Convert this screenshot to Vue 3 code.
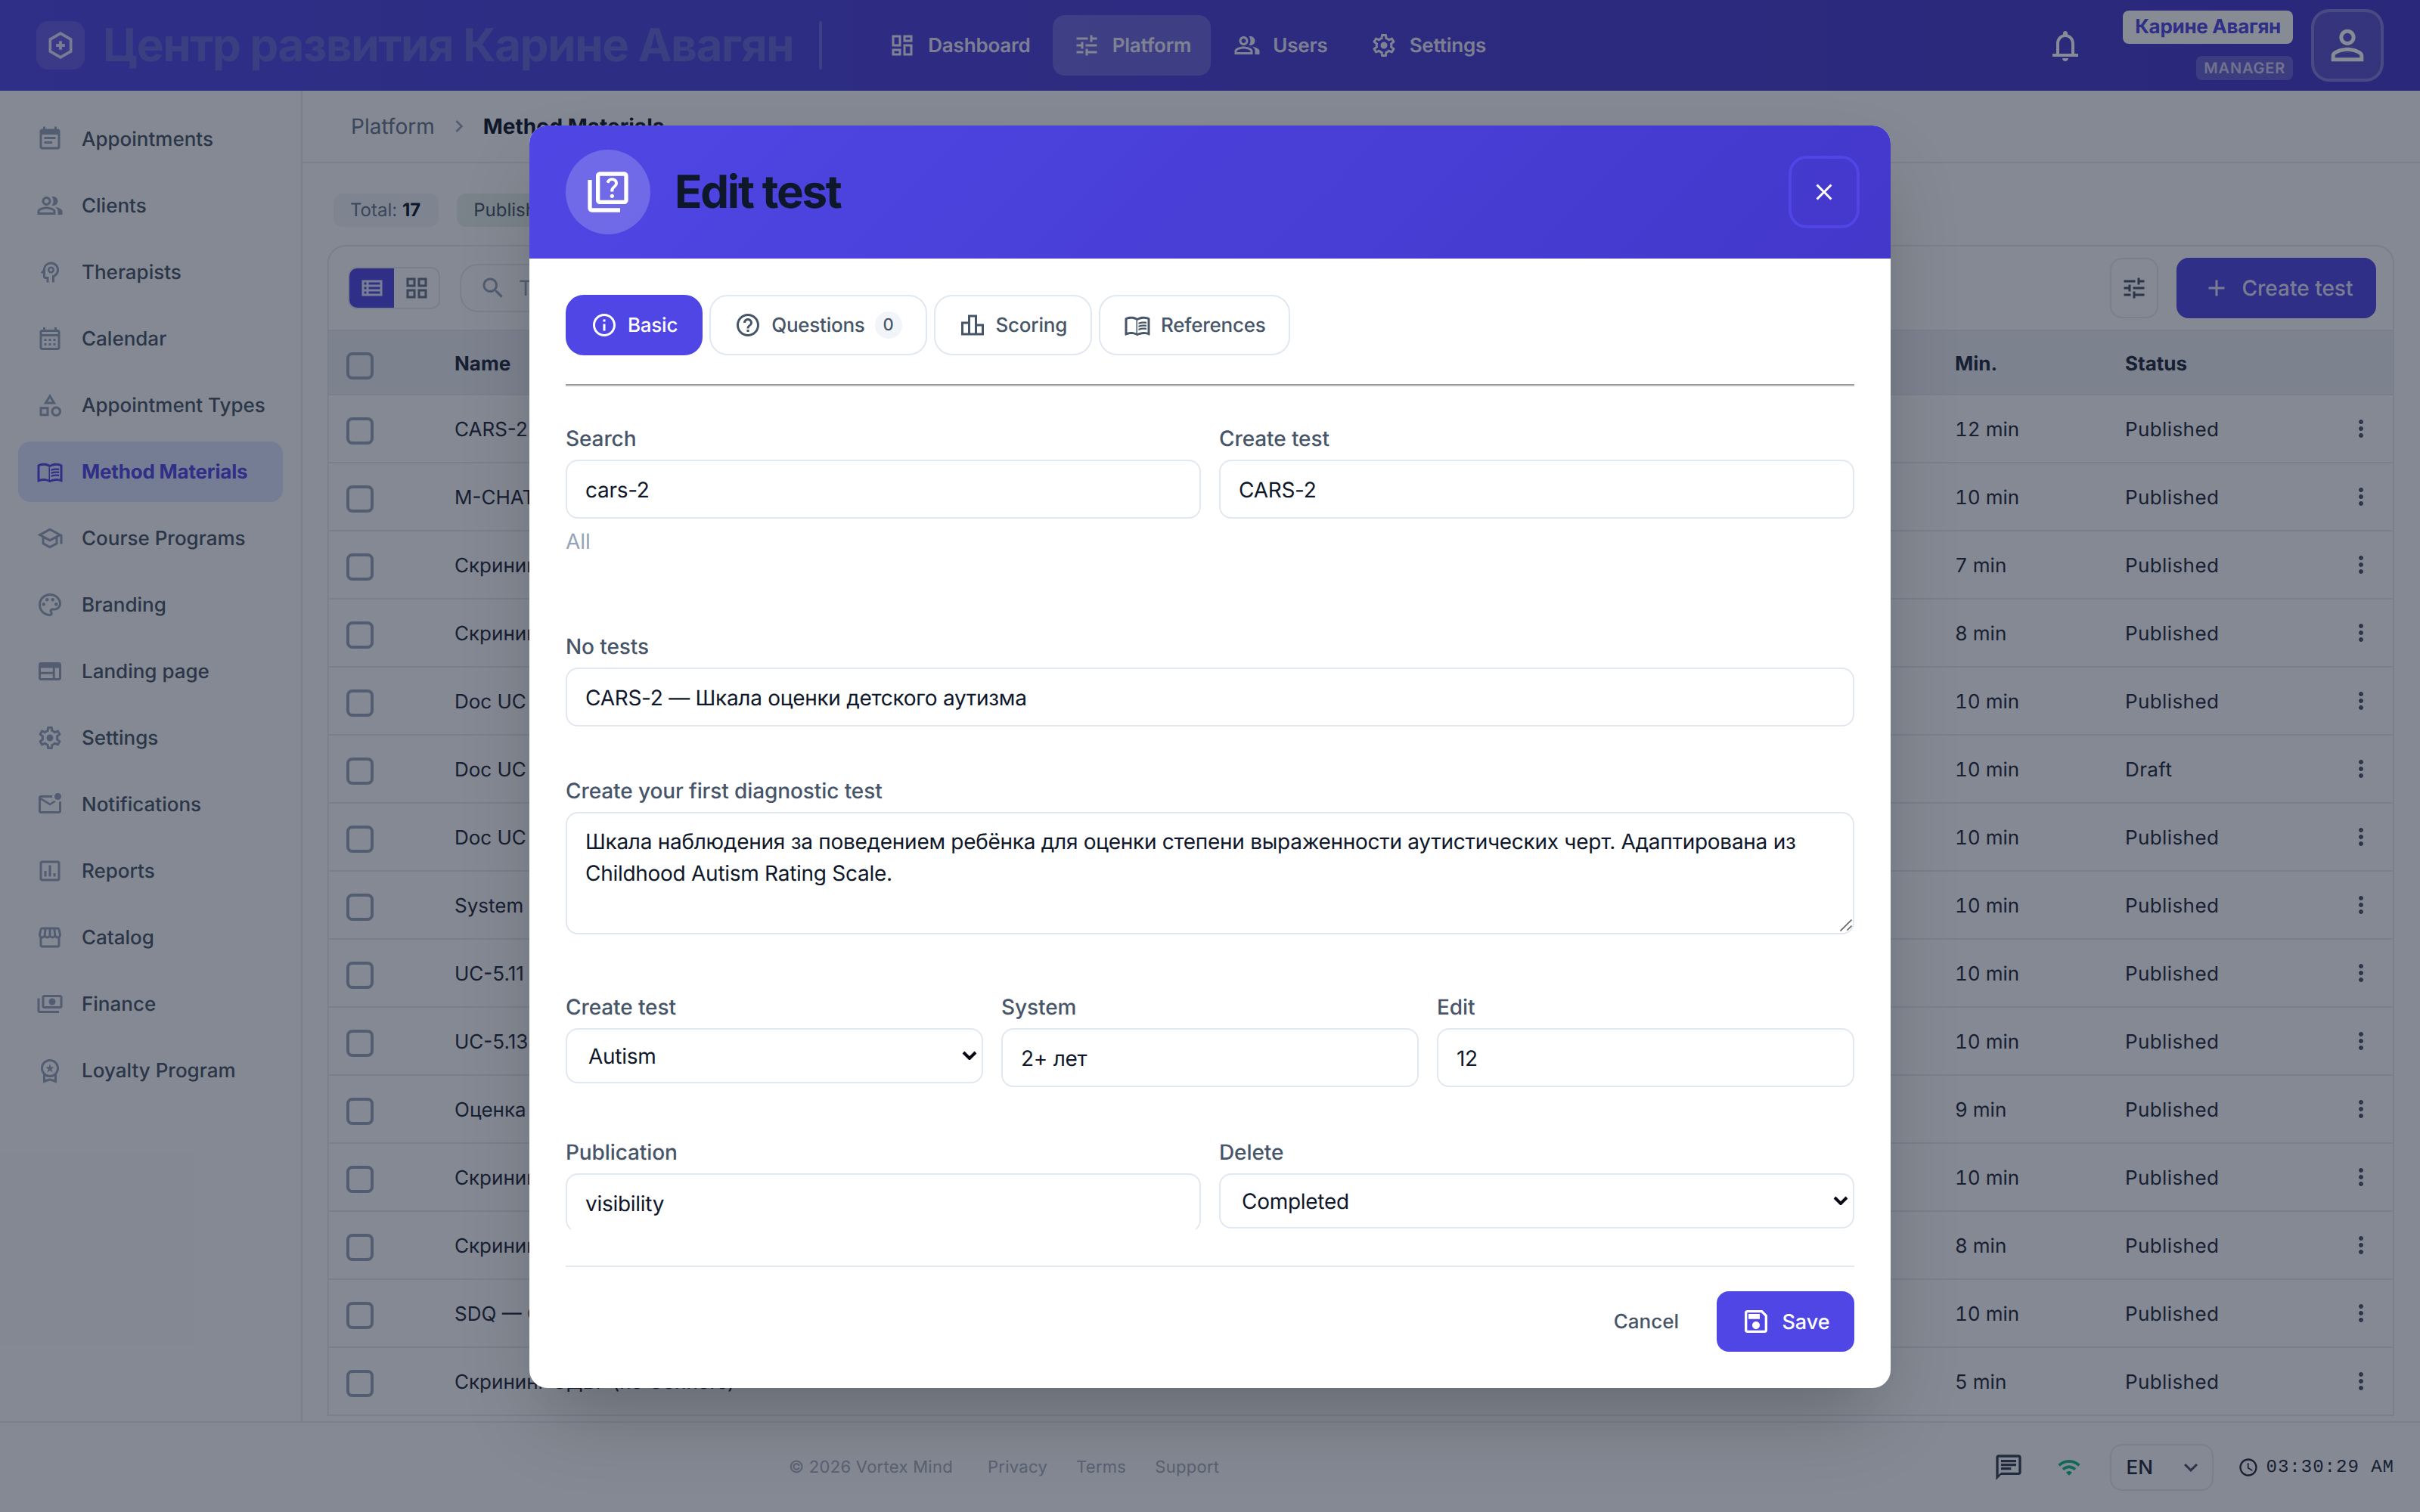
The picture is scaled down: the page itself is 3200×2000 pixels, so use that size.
<script setup>
const I = {
  event: 'M17 10H7v2h10v-2zm2-7h-1V1h-2v2H8V1H6v2H5c-1.11 0-1.99.9-1.99 2L3 19c0 1.1.89 2 2 2h14c1.1 0 2-.9 2-2V5c0-1.1-.9-2-2-2zm0 16H5V8h14v11zm-5-5H7v2h7v-2z',
  group: 'M16.67 13.13C18.04 14.06 19 15.32 19 17v3h4v-3c0-2.18-3.57-3.47-6.33-3.87zM15 12c2.21 0 4-1.79 4-4s-1.79-4-4-4c-.47 0-.91.1-1.33.24C14.5 5.27 15 6.58 15 8s-.5 2.73-1.33 3.76c.42.14.86.24 1.33.24zM9 12c2.21 0 4-1.79 4-4s-1.79-4-4-4-4 1.79-4 4 1.79 4 4 4zm0-6c1.1 0 2 .9 2 2s-.9 2-2 2-2-.9-2-2 .9-2 2-2zM9 13c-2.67 0-8 1.34-8 4v3h16v-3c0-2.66-5.33-4-8-4zm6 5H3v-.99C3.2 16.29 6.3 15 9 15s5.8 1.29 6 2v1z',
  psych: 'M13 3C9.25 3 6.2 5.94 6.02 9.64L4.1 12.2c-.25.33-.01.8.4.8H6v3c0 1.1.9 2 2 2h1v3h2v-5H8v-5.5l.02-1.2C8.1 6.9 10.3 5 13 5c2.76 0 5 2.24 5 5 0 2.09-1.29 3.94-3.21 4.67L14 15v6h2v-4.68c2.36-1.12 4-3.53 4-6.32 0-3.87-3.13-7-7-7zM13 7a3 3 0 100 6 3 3 0 000-6zm0 1.7a1.3 1.3 0 110 2.6 1.3 1.3 0 010-2.6z',
  cal: 'M19 4h-1V2h-2v2H8V2H6v2H5c-1.1 0-2 .9-2 2v14c0 1.1.9 2 2 2h14c1.1 0 2-.9 2-2V6c0-1.1-.9-2-2-2zm0 16H5V10h14v10zm0-12H5V6h14v2zM9 14H7v-2h2v2zm4 0h-2v-2h2v2zm4 0h-2v-2h2v2zm-8 4H7v-2h2v2zm4 0h-2v-2h2v2zm4 0h-2v-2h2v2z',
  category: 'M12 2l-5.5 9h11L12 2zm0 3.84L13.93 9h-3.87L12 5.84zM17.5 13c-2.49 0-4.5 2.01-4.5 4.5s2.01 4.5 4.5 4.5 4.5-2.01 4.5-4.5-2.01-4.5-4.5-4.5zm0 7c-1.38 0-2.5-1.12-2.5-2.5s1.12-2.5 2.5-2.5 2.5 1.12 2.5 2.5-1.12 2.5-2.5 2.5zM3 21.5h8v-8H3v8zm2-6h4v4H5v-4z',
  book: 'M21 5c-1.11-.35-2.33-.5-3.5-.5-1.95 0-4.05.4-5.5 1.5-1.45-1.1-3.55-1.5-5.5-1.5S2.45 4.9 1 6v14.65c0 .25.25.5.5.5.1 0 .15-.05.25-.05C3.1 20.45 5.05 20 6.5 20c1.95 0 4.05.4 5.5 1.5 1.35-.85 3.8-1.5 5.5-1.5 1.65 0 3.35.3 4.75 1.05.1.05.15.05.25.05.25 0 .5-.25.5-.5V6c-.6-.45-1.25-.75-2-1zM3 18.5V7c1.1-.35 2.3-.5 3.5-.5 1.34 0 3.13.41 4.5.99v11.5C9.63 18.41 7.84 18 6.5 18c-1.2 0-2.4.15-3.5.5zm18 0c-1.1-.35-2.3-.5-3.5-.5-1.7 0-4.15.65-5.5 1.5V8c1.35-.85 3.8-1.5 5.5-1.5 1.2 0 2.4.15 3.5.5v11.5zM17.5 10.5c.88 0 1.73.09 2.5.26V9.24c-.79-.15-1.64-.24-2.5-.24-1.7 0-3.24.29-4.5.83v1.66c1.13-.64 2.7-.99 4.5-.99zM13 12.49v1.66c1.13-.64 2.7-.99 4.5-.99.88 0 1.73.09 2.5.26V11.9c-.79-.15-1.64-.24-2.5-.24-1.7 0-3.24.3-4.5.83zM17.5 14.33c-1.7 0-3.24.29-4.5.83v1.66c1.13-.64 2.7-.99 4.5-.99.88 0 1.73.09 2.5.26v-1.52c-.79-.16-1.64-.24-2.5-.24z',
  school: 'M12 3L1 9l4 2.18v6L12 21l7-3.82v-6l2-1.09V17h2V9L12 3zm6.82 6L12 12.72 5.18 9 12 5.28 18.82 9zM17 15.99l-5 2.73-5-2.73v-3.72L12 15l5-2.73v3.72z',
  palette: 'M12 22C6.49 22 2 17.51 2 12S6.49 2 12 2s10 4.04 10 9c0 3.31-2.69 6-6 6h-1.77c-.28 0-.5.22-.5.5 0 .12.05.23.13.33.41.47.64 1.06.64 1.67 0 1.38-1.12 2.5-2.5 2.5zm0-18c-4.41 0-8 3.59-8 8s3.59 8 8 8c.28 0 .5-.22.5-.5 0-.16-.08-.28-.14-.35-.41-.46-.63-1.05-.63-1.65 0-1.38 1.12-2.5 2.5-2.5H16c2.21 0 4-1.79 4-4 0-3.86-3.59-7-8-7zM6.5 10a1.5 1.5 0 110 3 1.5 1.5 0 010-3zM9.5 6a1.5 1.5 0 110 3 1.5 1.5 0 010-3zM14.5 6a1.5 1.5 0 110 3 1.5 1.5 0 010-3zM17.5 10a1.5 1.5 0 110 3 1.5 1.5 0 010-3z',
  web: 'M20 4H4c-1.1 0-1.99.9-1.99 2L2 18c0 1.1.9 2 2 2h16c1.1 0 2-.9 2-2V6c0-1.1-.9-2-2-2zM4 9h10.5v3.5H4V9zm0 5.5h10.5V18H4v-3.5zM20 18h-3.5V9H20v9z',
  settings: 'M19.43 12.98c.04-.32.07-.64.07-.98 0-.34-.03-.66-.07-.98l2.11-1.65c.19-.15.24-.42.12-.64l-2-3.46c-.09-.16-.26-.25-.44-.25-.06 0-.12.01-.17.03l-2.49 1c-.52-.4-1.08-.73-1.69-.98l-.38-2.65C14.46 2.18 14.25 2 14 2h-4c-.25 0-.46.18-.49.42l-.38 2.65c-.61.25-1.17.59-1.69.98l-2.49-1c-.06-.02-.12-.03-.18-.03-.17 0-.34.09-.43.25l-2 3.46c-.13.22-.07.49.12.64l2.11 1.65c-.04.32-.07.65-.07.98 0 .33.03.66.07.98l-2.11 1.65c-.19.15-.24.42-.12.64l2 3.46c.09.16.26.25.44.25.06 0 .12-.01.17-.03l2.49-1c.52.4 1.08.73 1.69.98l.38 2.65c.03.24.24.42.49.42h4c.25 0 .46-.18.49-.42l.38-2.65c.61-.25 1.17-.59 1.69-.98l2.49 1c.06.02.12.03.18.03.17 0 .34-.09.43-.25l2-3.46c.12-.22.07-.49-.12-.64l-2.11-1.65zm-1.98-1.71c.04.31.05.52.05.73 0 .21-.02.43-.05.73l-.14 1.13.89.7 1.08.84-.7 1.21-1.27-.51-1.04-.42-.9.68c-.43.32-.84.56-1.25.73l-1.06.43-.16 1.13-.2 1.35h-1.4l-.19-1.35-.16-1.13-1.06-.43c-.43-.18-.83-.41-1.23-.71l-.91-.7-1.06.43-1.27.51-.7-1.21 1.08-.84.89-.7-.14-1.13c-.03-.31-.05-.54-.05-.74s.02-.43.05-.73l.14-1.13-.89-.7-1.08-.84.7-1.21 1.27.51 1.04.42.9-.68c.43-.32.84-.56 1.25-.73l1.06-.43.16-1.13.2-1.35h1.39l.19 1.35.16 1.13 1.06.43c.43.18.83.41 1.23.71l.91.7 1.06-.43 1.27-.51.7 1.21-1.07.85-.89.7.14 1.13zM12 9a3 3 0 100 6 3 3 0 000-6z',
  mail: 'M22 8.98V18c0 1.1-.9 2-2 2H4c-1.1 0-2-.9-2-2V6c0-1.1.9-2 2-2h10.1c-.06.32-.1.66-.1 1s.04.68.1 1H4l8 5 3.67-2.29c.47.43 1.02.76 1.63 1L12 13 4 8v10h16V9.9c.74-.15 1.42-.48 2-.92zM16 5c0 1.66 1.34 3 3 3s3-1.34 3-3-1.34-3-3-3-3 1.34-3 3z',
  report: 'M19 3H5c-1.1 0-2 .9-2 2v14c0 1.1.9 2 2 2h14c1.1 0 2-.9 2-2V5c0-1.1-.9-2-2-2zm0 16H5V5h14v14zM7 12h2v5H7zm4-5h2v10h-2zm4 7h2v3h-2z',
  store: 'M21.9 8.89l-1.05-4.37c-.22-.9-1-1.52-1.91-1.52H5.05c-.9 0-1.69.63-1.9 1.52L2.1 8.89c-.24 1.02-.02 2.06.62 2.88.08.11.19.19.28.29V19c0 1.1.9 2 2 2h14c1.1 0 2-.9 2-2v-6.94c.09-.09.2-.18.28-.28.64-.82.87-1.87.62-2.89zm-2.99-3.9l1.05 4.37c.1.42.01.84-.25 1.17-.14.18-.44.47-.94.47-.61 0-1.14-.49-1.21-1.14L16.98 5l1.93-.01zM13 5h1.96l.54 4.52c.05.39-.07.78-.33 1.07-.22.26-.54.41-.95.41-.67 0-1.22-.59-1.22-1.31V5zM8.49 9.52L9.04 5H11v4.69c0 .72-.55 1.31-1.29 1.31-.34 0-.65-.15-.89-.41-.25-.29-.37-.68-.33-1.07zm-4.45-.16L5.05 5h1.97l-.58 4.86c-.08.65-.6 1.14-1.21 1.14-.49 0-.8-.29-.93-.47-.27-.32-.36-.75-.26-1.17zM5 19v-6.03c.08.01.15.03.23.03.87 0 1.66-.36 2.24-.95.6.6 1.4.95 2.31.95.87 0 1.65-.36 2.23-.93.59.57 1.39.93 2.29.93.84 0 1.64-.35 2.24-.95.58.59 1.37.95 2.24.95.08 0 .15-.02.23-.03V19H5z',
  pay: 'M5 14V6c0-1.1.9-2 2-2h14c1.1 0 2 .9 2 2v8c0 1.1-.9 2-2 2H7c-1.1 0-2-.9-2-2zm2 0h14V6H7v8zm7-7c1.66 0 3 1.34 3 3s-1.34 3-3 3-3-1.34-3-3 1.34-3 3-3zM1 7v11c0 1.1.9 2 2 2h17v-2H3V7H1z',
  premium: 'M9.68 13.69L12 11.93l2.31 1.76-.88-2.85L15.75 9h-2.84L12 6.19 11.09 9H8.25l2.31 1.84-.88 2.85zM20 10c0-4.42-3.58-8-8-8s-8 3.58-8 8c0 2.03.76 3.87 2 5.28V23l6-2 6 2v-7.72c1.24-1.41 2-3.25 2-5.28zM12 4c3.31 0 6 2.69 6 6s-2.69 6-6 6-6-2.69-6-6 2.69-6 6-6zm0 15l-4 1.02v-3.1c1.18.68 2.54 1.08 4 1.08s2.82-.4 4-1.08v3.1L12 19z',
  dash: 'M19 5v2h-4V5h4M9 5v6H5V5h4m10 8v6h-4v-6h4M9 17v2H5v-2h4M21 3h-8v6h8V3zM11 3H3v10h8V3zm10 8h-8v10h8V11zm-10 4H3v6h8v-6z',
  tune: 'M3 17v2h6v-2H3zM3 5v2h10V5H3zm10 16v-2h8v-2h-8v-2h-2v6h2zM7 9v2H3v2h4v2h2V9H7zm14 4v-2H11v2h10zm-6-4h2V7h4V5h-4V3h-2v6z',
  bell: 'M10 20.5h4c0 1.1-.9 2-2 2s-2-.9-2-2zM3.5 17.5h17v2h-17zM6 17.5V11c0-3.1 1.6-5.6 4.5-6.3V4c0-.83.67-1.5 1.5-1.5s1.5.67 1.5 1.5v.7C16.4 5.4 18 7.9 18 11v6.5h-2V11c0-2.5-1.5-4.5-4-4.5S8 8.5 8 11v6.5z',
  person: 'M12 5.9c1.16 0 2.1.94 2.1 2.1s-.94 2.1-2.1 2.1S9.9 9.16 9.9 8s.94-2.1 2.1-2.1m0 9c2.97 0 6.1 1.46 6.1 2.1v1.1H5.9V17c0-.64 3.13-2.1 6.1-2.1M12 4C9.79 4 8 5.79 8 8s1.79 4 4 4 4-1.79 4-4-1.79-4-4-4zm0 9c-2.67 0-8 1.34-8 4v3h16v-3c0-2.66-5.33-4-8-4z',
  quiz: 'M4 6H2v14c0 1.1.9 2 2 2h14v-2H4V6zM20 2H8C6.9 2 6 2.9 6 4v12c0 1.1.9 2 2 2h12c1.1 0 2-.9 2-2V4C22 2.9 21.1 2 20 2zM20 16H8V4h12v12zM13.51 10.16c.41-.73 1.18-1.16 1.63-1.8.48-.68.21-1.94-1.14-1.94-.88 0-1.32.67-1.5 1.23l-1.37-.57C11.51 5.96 12.52 5 13.99 5c1.23 0 2.08.56 2.51 1.26.37.6.58 1.73.01 2.57-.63.93-1.23 1.21-1.56 1.81-.13.24-.18.4-.18 1.18h-1.52c0-.41-.06-1.08.26-1.66zM13 14c0-.56.45-1 1-1s1 .44 1 1-.45 1-1 1-1-.44-1-1z',
  info: 'M11 7h2v2h-2zm0 4h2v6h-2zm1-9C6.48 2 2 6.48 2 12s4.48 10 10 10 10-4.48 10-10S17.52 2 12 2zm0 18c-4.41 0-8-3.59-8-8s3.59-8 8-8 8 3.59 8 8-3.59 8-8 8z',
  help: 'M11 18h2v-2h-2v2zm1-16C6.48 2 2 6.48 2 12s4.48 10 10 10 10-4.48 10-10S17.52 2 12 2zm0 18c-4.41 0-8-3.59-8-8s3.59-8 8-8 8 3.59 8 8-3.59 8-8 8zm0-14c-2.21 0-4 1.79-4 4h2c0-1.1.9-2 2-2s2 .9 2 2c0 2-3 1.75-3 5h2c0-2.25 3-2.5 3-5 0-2.21-1.79-4-4-4z',
  bars: 'M16 11V3H8v6H2v12h20V11h-6zm-6-6h4v14h-4V5zm-6 6h4v8H4v-8zm16 8h-4v-6h4v6z',
  close: 'M19 6.41L17.59 5 12 10.59 6.41 5 5 6.41 10.59 12 5 17.59 6.41 19 12 13.41 17.59 19 19 17.59 13.41 12z',
  save: 'M17 3H5c-1.11 0-2 .9-2 2v14c0 1.1.89 2 2 2h14c1.1 0 2-.9 2-2V7l-4-4zm2 16H5V5h11.17L19 7.83V19zm-7-7c-1.66 0-3 1.34-3 3s1.34 3 3 3 3-1.34 3-3-1.34-3-3-3zM6 6h9v4H6z',
  add: 'M19 13h-6v6h-2v-6H5v-2h6V5h2v6h6v2z',
  more: 'M12 8c1.1 0 2-.9 2-2s-.9-2-2-2-2 .9-2 2 .9 2 2 2zm0 2c-1.1 0-2 .9-2 2s.9 2 2 2 2-.9 2-2-.9-2-2-2zm0 6c-1.1 0-2 .9-2 2s.9 2 2 2 2-.9 2-2-.9-2-2-2z',
  list: 'M3 5v14h18V5H3zm4 2v2H5V7h2zm-2 6v-2h2v2H5zm0 2h2v2H5v-2zm14 2H9v-2h10v2zm0-4H9v-2h10v2zm0-4H9V7h10v2z',
  grid: 'M3 3v8h8V3H3zm6 6H5V5h4v4zm-6 4v8h8v-8H3zm6 6H5v-4h4v4zm4-16v8h8V3h-8zm6 6h-4V5h4v4zm-6 4v8h8v-8h-8zm6 6h-4v-4h4v4z',
  search: 'M15.5 14h-.79l-.28-.27C15.41 12.59 16 11.11 16 9.5 16 5.91 13.09 3 9.5 3S3 5.91 3 9.5 5.91 16 9.5 16c1.61 0 3.09-.59 4.23-1.57l.27.28v.79l5 4.99L20.49 19l-4.99-5zm-6 0C7.01 14 5 11.99 5 9.5S7.01 5 9.5 5 14 7.01 14 9.5 11.99 14 9.5 14z',
  chat: 'M20 2H4c-1.1 0-2 .9-2 2v18l4-4h14c1.1 0 2-.9 2-2V4c0-1.1-.9-2-2-2zm0 14H6l-2 2V4h16v12zM6 6h12v2H6zM6 9h12v2H6zM6 12h8v2H6z',
  wifi: 'M1 9l2 2c4.97-4.97 13.03-4.97 18 0l2-2C16.93 2.93 7.08 2.93 1 9zm8 8l3 3 3-3c-1.65-1.66-4.34-1.66-6 0zm-4-4l2 2c2.76-2.76 7.24-2.76 10 0l2-2C15.14 9.14 8.87 9.14 5 13z',
  clock: 'M11.99 2C6.47 2 2 6.48 2 12s4.47 10 9.99 10C17.52 22 22 17.52 22 12S17.52 2 11.99 2zM12 20c-4.42 0-8-3.58-8-8s3.58-8 8-8 8 3.58 8 8-3.58 8-8 8zm.5-13H11v6l5.25 3.15.75-1.23-4.5-2.67z',
  chevron: 'M7.41 8.59L12 13.17l4.59-4.58L18 10l-6 6-6-6 1.41-1.41z',
  chevronR: 'M8.59 16.59L13.17 12 8.59 7.41 10 6l6 6-6 6-1.41-1.41z'
}

const topNav = [
  { label: 'Dashboard', icon: I.dash },
  { label: 'Platform', icon: I.tune, active: true },
  { label: 'Users', icon: I.group },
  { label: 'Settings', icon: I.settings }
]

const sideNav = [
  { label: 'Appointments', icon: I.event },
  { label: 'Clients', icon: I.group },
  { label: 'Therapists', icon: I.psych },
  { label: 'Calendar', icon: I.cal },
  { label: 'Appointment Types', icon: I.category },
  { label: 'Method Materials', icon: I.book, active: true },
  { label: 'Course Programs', icon: I.school },
  { label: 'Branding', icon: I.palette },
  { label: 'Landing page', icon: I.web },
  { label: 'Settings', icon: I.settings },
  { label: 'Notifications', icon: I.mail },
  { label: 'Reports', icon: I.report },
  { label: 'Catalog', icon: I.store },
  { label: 'Finance', icon: I.pay },
  { label: 'Loyalty Program', icon: I.premium }
]

const rows = [
  ['CARS-2', '12 min', 'Published'],
  ['M-CHAT', '10 min', 'Published'],
  ['Скрининг', '7 min', 'Published'],
  ['Скрининг', '8 min', 'Published'],
  ['Doc UC', '10 min', 'Published'],
  ['Doc UC', '10 min', 'Draft'],
  ['Doc UC', '10 min', 'Published'],
  ['System', '10 min', 'Published'],
  ['UC-5.11', '10 min', 'Published'],
  ['UC-5.13', '10 min', 'Published'],
  ['Оценка', '9 min', 'Published'],
  ['Скрининг', '10 min', 'Published'],
  ['Скрининг', '8 min', 'Published'],
  ['SDQ — Опросник', '10 min', 'Published'],
  ['Скрининг СДВГ (по Connors)', '5 min', 'Published']
]

const tabs = [
  { label: 'Basic', icon: I.info, active: true },
  { label: 'Questions', icon: I.help, badge: '0' },
  { label: 'Scoring', icon: I.bars },
  { label: 'References', icon: I.book }
]
</script>

<template>
  <div class="app">
    <header class="topbar">
      <div class="logo">
        <svg viewBox="0 0 24 24" class="logo-mark"><path d="M12 2.5l8.2 4.75v9.5L12 21.5l-8.2-4.75v-9.5z" /><path class="plus" d="M12 8.5v7M8.5 12h7" /></svg>
      </div>
      <div class="brand">Центр развития Карине Авагян</div>
      <div class="brand-rule"></div>
      <nav class="topnav">
        <a v-for="n in topNav" :key="n.label" class="topnav-item" :class="{ on: n.active }">
          <svg class="ic i36" viewBox="0 0 24 24"><path :d="n.icon" /></svg>
          <span>{{ n.label }}</span>
        </a>
      </nav>
      <div class="top-right">
        <svg class="ic bell" viewBox="0 0 24 24"><path :d="I.bell" /></svg>
        <div class="who">
          <span class="who-name">Карине Авагян</span>
          <span class="who-role">MANAGER</span>
        </div>
        <button class="avatar"><svg class="ic i64" viewBox="0 0 24 24"><path :d="I.person" /></svg></button>
      </div>
    </header>

    <div class="shell">
      <aside class="side">
        <a v-for="s in sideNav" :key="s.label" class="side-item" :class="{ on: s.active }">
          <svg class="ic i36" viewBox="0 0 24 24"><path :d="s.icon" /></svg>
          <span>{{ s.label }}</span>
        </a>
      </aside>

      <main class="main">
        <div class="crumbs">
          <span>Platform</span>
          <svg class="ic crumb-sep" viewBox="0 0 24 24"><path :d="I.chevronR" /></svg>
          <strong>Method Materials</strong>
        </div>
        <div class="stats">
          <span class="stat">Total: <b>17</b></span>
          <span class="stat green">Published: <b>16</b></span>
        </div>
        <section class="card">
          <div class="toolbar">
            <div class="views">
              <span class="view on"><svg class="ic i36" viewBox="0 0 24 24"><path :d="I.list" /></svg></span>
              <span class="view"><svg class="ic i36" viewBox="0 0 24 24"><path :d="I.grid" /></svg></span>
            </div>
            <div class="search">
              <svg class="ic i36" viewBox="0 0 24 24"><path :d="I.search" /></svg>
              <span>Test name</span>
            </div>
            <button class="tool"><svg class="ic i36" viewBox="0 0 24 24"><path :d="I.tune" /></svg></button>
            <button class="create"><svg class="ic i36" viewBox="0 0 24 24"><path :d="I.add" /></svg>Create test</button>
          </div>
          <div class="row head">
            <span class="box"></span>
            <span>Name</span>
            <span>Min.</span>
            <span>Status</span>
            <span></span>
          </div>
          <div v-for="(r, i) in rows" :key="i" class="row">
            <span class="box"></span>
            <span>{{ r[0] }}</span>
            <span class="num">{{ r[1] }}</span>
            <span class="state">{{ r[2] }}</span>
            <svg class="ic i36 kebab" viewBox="0 0 24 24"><path :d="I.more" /></svg>
          </div>
        </section>
      </main>
    </div>

    <footer class="foot">
      <div class="foot-links">
        <span class="copy">© 2026 Vortex Mind</span>
        <span>Privacy</span>
        <span>Terms</span>
        <span>Support</span>
      </div>
      <div class="foot-right">
        <svg class="ic chat" viewBox="0 0 24 24"><path :d="I.chat" /></svg>
        <svg class="ic wifi" viewBox="0 0 24 24"><path :d="I.wifi" /></svg>
        <div class="lang"><span>EN</span><svg class="ic i36" viewBox="0 0 24 24"><path :d="I.chevron" /></svg></div>
        <div class="time"><svg class="ic clock" viewBox="0 0 24 24"><path :d="I.clock" /></svg><span>03:30:29 AM</span></div>
      </div>
    </footer>

    <div class="overlay">
      <div class="modal">
        <div class="modal-head">
          <div class="modal-badge"><svg class="ic i64" viewBox="0 0 24 24"><path :d="I.quiz" /></svg></div>
          <h2>Edit test</h2>
          <button class="modal-close"><svg class="ic i36" viewBox="0 0 24 24"><path :d="I.close" /></svg></button>
        </div>

        <div class="tabs">
          <button v-for="t in tabs" :key="t.label" class="tab" :class="{ on: t.active }">
            <svg class="ic i36" viewBox="0 0 24 24"><path :d="t.icon" /></svg>
            <span>{{ t.label }}</span>
            <span v-if="t.badge" class="tab-badge">{{ t.badge }}</span>
          </button>
        </div>
        <div class="tabs-rule"></div>

        <div class="form">
          <div class="cols two first">
            <label class="field">
              <span class="lab">Search</span>
              <input class="ctl" value="cars-2" />
              <span class="hint">All</span>
            </label>
            <label class="field">
              <span class="lab">Create test</span>
              <input class="ctl" value="CARS-2" />
            </label>
          </div>
          <label class="field block-name">
            <span class="lab">No tests</span>
            <input class="ctl" value="CARS-2 — Шкала оценки детского аутизма" />
          </label>
          <label class="field block-desc">
            <span class="lab">Create your first diagnostic test</span>
            <span class="area-wrap">
              <textarea class="ctl area" rows="3">Шкала наблюдения за поведением ребёнка для оценки степени выраженности аутистических черт. Адаптирована из Childhood Autism Rating Scale.</textarea>
              <svg class="grip" viewBox="0 0 16 16"><path d="M0.5 15.5L15.5 0.5M9.5 14.5L15.5 8.5" /></svg>
            </span>
          </label>
          <div class="cols three">
            <label class="field">
              <span class="lab">Create test</span>
              <span class="sel-wrap">
                <select class="ctl sel"><option>Autism</option></select>
                <svg class="sel-arrow" viewBox="0 0 20 12"><path d="M2 2l8 8 8-8" /></svg>
              </span>
            </label>
            <label class="field">
              <span class="lab">System</span>
              <input class="ctl" value="2+ лет" />
            </label>
            <label class="field">
              <span class="lab">Edit</span>
              <input class="ctl" value="12" />
            </label>
          </div>
          <div class="cols two last">
            <label class="field">
              <span class="lab">Publication</span>
              <input class="ctl" value="visibility" />
            </label>
            <label class="field">
              <span class="lab">Delete</span>
              <span class="sel-wrap">
                <select class="ctl sel"><option>Completed</option></select>
                <svg class="sel-arrow" viewBox="0 0 20 12"><path d="M2 2l8 8 8-8" /></svg>
              </span>
            </label>
          </div>
        </div>

        <div class="modal-foot">
          <button class="cancel">Cancel</button>
          <button class="save"><svg class="ic i40" viewBox="0 0 24 24"><path :d="I.save" /></svg>Save</button>
        </div>
      </div>
    </div>
  </div>
</template>

<style>
html, body { margin: 0; padding: 0; }
</style>

<style scoped>
.app {
  position: relative;
  width: 3200px;
  height: 2000px;
  overflow: hidden;
  display: flex;
  flex-direction: column;
  background: #f8fafc;
  color: #0f172a;
  font-family: Inter, "Noto Sans", sans-serif;
  font-size: 28px;
  text-rendering: geometricPrecision;
}
.ic { display: block; flex: none; fill: currentColor; fill-rule: evenodd; }
.i36 { width: 36px; height: 36px; }
.i40 { width: 40px; height: 40px; }
.i64 { width: 64px; height: 64px; }
button { font-family: inherit; border: 0; background: none; padding: 0; text-rendering: geometricPrecision; }

/* Top bar */
.topbar {
  flex: none;
  height: 120px;
  box-sizing: border-box;
  display: flex;
  align-items: center;
  padding: 0 48px;
  background: linear-gradient(90deg, #4f46e5, #4338ca);
}
.logo {
  width: 64px;
  height: 64px;
  border-radius: 16px;
  background: rgba(255, 255, 255, .12);
  display: flex;
  align-items: center;
  justify-content: center;
}
.logo-mark { width: 40px; height: 40px; fill: none; stroke: rgba(255,255,255,.8); stroke-width: 2.2; }
.logo-mark .plus { stroke-width: 2.4; }
.brand {
  margin-left: 24px;
  font-size: 60px;
  font-weight: 700;
  line-height: 72px;
  letter-spacing: -1.3px;
  color: #6366d8;
  white-space: nowrap;
}
.brand-rule { width: 4px; height: 64px; margin-left: 34px; border-radius: 2px; background: rgba(255,255,255,.2); }
.topnav { display: flex; gap: 8px; margin-left: 64px; }
.topnav-item {
  height: 80px;
  box-sizing: border-box;
  padding: 0 24px;
  display: flex;
  align-items: center;
  gap: 16px;
  border-radius: 16px;
  font-size: 26px;
  font-weight: 600;
  letter-spacing: -.2px;
  color: rgba(255, 255, 255, .9);
}
.topnav-item.on { background: rgba(255, 255, 255, .2); margin: 0 -2px 0 -3px; padding: 0 26px 0 27px; }
.top-right { margin-left: auto; display: flex; align-items: center; }
.bell { width: 48px; height: 48px; color: #fff; }
.who { margin-left: 52px; display: flex; flex-direction: column; align-items: flex-end; gap: 16px; }
.who-name {
  height: 44px;
  line-height: 44px;
  box-sizing: border-box;
  padding: 0 16px;
  border-radius: 8px;
  background: #fff;
  color: #4f46e5;
  font-size: 26px;
  font-weight: 700;
  letter-spacing: -.3px;
}
.who-role {
  height: 32px;
  line-height: 32px;
  padding: 0 10px;
  border-radius: 8px;
  background: rgba(255, 255, 255, .2);
  color: rgba(255, 255, 255, .7);
  font-size: 20px;
  font-weight: 600;
  letter-spacing: .8px;
}
.avatar {
  margin-left: 24px;
  width: 96px;
  height: 96px;
  box-sizing: border-box;
  border: 4px solid rgba(255, 255, 255, .25);
  border-radius: 24px;
  background: rgba(255, 255, 255, .12);
  color: #fff;
  display: flex;
  align-items: center;
  justify-content: center;
}

/* Shell */
.shell { flex: 1; min-height: 0; display: flex; }
.side {
  flex: none;
  width: 400px;
  box-sizing: border-box;
  padding: 24px 24px 0;
  border-right: 2px solid #e2e8f0;
  display: flex;
  flex-direction: column;
  gap: 8px;
}
.side-item {
  height: 80px;
  flex: none;
  box-sizing: border-box;
  width: 350px;
  padding: 0 24px;
  display: flex;
  align-items: center;
  gap: 24px;
  border-radius: 16px;
  font-size: 26px;
  font-weight: 500;
  color: #475569;
  white-space: nowrap;
}
.side-item .ic { color: #94a3b8; }
.side-item.on { background: #dbe2ff; color: #4f46e5; font-weight: 700; letter-spacing: -.2px; }
.side-item.on .ic { color: #4f46e5; }

.main { flex: 1; min-width: 0; overflow: hidden; }
.crumbs {
  height: 96px;
  box-sizing: border-box;
  border-bottom: 2px solid #e2e8f0;
  padding: 0 64px;
  display: flex;
  align-items: center;
  color: #64748b;
}
.crumb-sep { width: 32px; height: 32px; margin: 0 16px; color: #94a3b8; }
.crumbs strong { font-weight: 700; color: #0f172a; }
.stats { display: flex; gap: 24px; padding: 40px 0 0 41px; }
.stat {
  height: 44px;
  line-height: 44px;
  padding: 0 24px 0 22px;
  border-radius: 12px;
  background: #eef2f6;
  color: #64748b;
  font-size: 24px;
}
.stat b { color: #0f172a; font-weight: 700; }
.stat.green { background: #e2efe8; color: #475569; }

.card {
  margin: 24px 34px 0 33px;
  border: 2px solid #e2e8f0;
  border-bottom: 0;
  border-radius: 24px 24px 0 0;
}
.toolbar {
  height: 112px;
  box-sizing: border-box;
  display: flex;
  align-items: center;
  padding: 0 22px 0 25px;
  border-bottom: 2px solid #e2e8f0;
  gap: 24px;
}
.views {
  width: 122px;
  height: 56px;
  box-sizing: border-box;
  border: 2px solid #e2e8f0;
  border-radius: 12px;
  overflow: hidden;
  display: flex;
}
.view { flex: 1; display: flex; align-items: center; justify-content: center; color: #64748b; }
.view.on { background: #4f46e5; color: #e0e7ff; }
.search {
  flex: 1;
  height: 64px;
  box-sizing: border-box;
  border: 2px solid #e2e8f0;
  border-radius: 24px;
  padding-left: 24px;
  display: flex;
  align-items: center;
  gap: 16px;
  margin-left: 2px;
  margin-right: 1000px;
  color: #94a3b8;
}
.tool {
  width: 64px;
  height: 80px;
  box-sizing: border-box;
  border: 2px solid #e2e8f0;
  border-radius: 16px;
  display: flex;
  align-items: center;
  justify-content: center;
  color: #475569;
  flex: none;
}
.create {
  width: 264px;
  height: 80px;
  flex: none;
  box-sizing: border-box;
  padding-left: 4px;
  border-radius: 16px;
  background: #4f46e5;
  color: rgba(255, 255, 255, .85);
  font-size: 28px;
  font-weight: 500;
  display: flex;
  align-items: center;
  justify-content: center;
  gap: 16px;
}
.row {
  height: 90px;
  box-sizing: border-box;
  padding-top: 2px;
  display: grid;
  grid-template-columns: 166px 1984px 225px 1fr 60px;
  align-items: center;
  border-bottom: 2px solid #e2e8f0;
  color: #1e293b;
  font-size: 26px;
  white-space: nowrap;
}
.row.head { height: 85px; padding-top: 3px; background: #e8edf3; font-weight: 700; }
.num { font-variant-numeric: tabular-nums; }
.state { letter-spacing: .4px; }
.box {
  width: 36px;
  height: 36px;
  box-sizing: border-box;
  margin: 3px 0 0 23px;
  border: 4px solid #94a3b8;
  border-radius: 8px;
}
.head .box { margin-top: 5px; }
.kebab { color: #475569; margin: 0 0 2px; }

/* Footer */
.foot {
  flex: none;
  height: 120px;
  box-sizing: border-box;
  border-top: 2px solid #e2e8f0;
  display: flex;
  align-items: center;
  padding: 0 34px 0 1043px;
  font-size: 22px;
  letter-spacing: .28px;
  color: #a3adbb;
}
.foot-links { display: flex; gap: 38px; }
.copy { margin-right: 8px; }
.foot-right { margin-left: auto; display: flex; align-items: center; color: #1e293b; letter-spacing: 0; }
.chat { width: 40px; height: 40px; color: #334155; }
.wifi { width: 32px; height: 32px; margin-left: 44px; color: #10b981; }
.lang {
  margin-left: 38px;
  width: 137px;
  height: 62px;
  box-sizing: border-box;
  border: 2px solid #e2e8f0;
  border-radius: 16px;
  padding: 0 10px 0 20px;
  display: flex;
  align-items: center;
  justify-content: space-between;
  font-size: 26px;
  font-weight: 500;
}
.lang .ic { color: #475569; }
.time {
  margin-left: 32px;
  display: flex;
  align-items: center;
  gap: 10px;
  font-family: "Liberation Mono", monospace;
  font-size: 24px;
  letter-spacing: 1px;
}
.clock { width: 28px; height: 28px; }

/* Modal */
.overlay {
  position: absolute;
  inset: 0;
  background: rgba(15, 23, 42, .5);
  display: flex;
  align-items: flex-start;
  justify-content: center;
  padding-top: 166px;
  box-sizing: border-box;
}
.modal {
  width: 1800px;
  height: 1670px;
  border-radius: 24px;
  background: #fff;
  overflow: hidden;
  display: flex;
  flex-direction: column;
  box-shadow: 0 50px 100px -24px rgba(0, 0, 0, .25);
}
.modal-head {
  flex: none;
  height: 176px;
  box-sizing: border-box;
  padding: 0 41px 0 48px;
  display: flex;
  align-items: center;
  background: linear-gradient(135deg, #4f46e5, #4338ca);
}
.modal-badge {
  width: 112px;
  height: 112px;
  border-radius: 50%;
  background: rgba(255, 255, 255, .2);
  color: #fff;
  display: flex;
  align-items: center;
  justify-content: center;
}
.modal-head h2 {
  margin: 0 0 0 32px;
  font-size: 60px;
  font-weight: 700;
  line-height: 72px;
  letter-spacing: -2.2px;
  color: #0f172a;
}
.modal-close {
  margin-left: auto;
  width: 94px;
  height: 96px;
  box-sizing: border-box;
  border: 4px solid #4f46e5;
  border-radius: 24px;
  color: #fff;
  display: flex;
  align-items: center;
  justify-content: center;
}
.tabs { flex: none; display: flex; gap: 9px; padding: 48px 48px 0; }
.tab {
  height: 80px;
  box-sizing: border-box;
  padding: 0 31px;
  border: 2px solid #e2e8f0;
  border-radius: 24px;
  display: flex;
  align-items: center;
  gap: 13px;
  font-size: 26px;
  font-weight: 500;
  letter-spacing: -.25px;
  color: #475569;
  background: #fff;
}
.tab.on { background: #4f46e5; border-color: #4f46e5; color: #fff; }
.tab-badge {
  width: 36px;
  height: 36px;
  line-height: 36px;
  text-align: center;
  border-radius: 18px;
  background: #f1f5f9;
  font-size: 22px;
}
.tabs-rule {
  flex: none;
  margin: 38px 48px 0;
  height: 4px;
  box-sizing: border-box;
  border-top: 2px solid #9a9a9a;
  border-bottom: 2px solid #eeeeee;
}
.form {
  flex: none;
  height: 1114px;
  box-sizing: border-box;
  padding: 48px 48px 0;
  overflow: hidden;
}
.cols { display: grid; gap: 24px; }
.two { grid-template-columns: 1fr 1fr; }
.three { grid-template-columns: 1fr 1fr 1fr; margin-top: 76px; }
.cols.first { height: 275px; }
.cols.last { margin-top: 66px; }
.field { display: flex; flex-direction: column; align-items: stretch; }
.block-desc { margin-top: 65px; }
.lab {
  height: 40px;
  line-height: 40px;
  margin-bottom: 8px;
  font-weight: 500;
  letter-spacing: -.1px;
  color: #475569;
}
.ctl {
  box-sizing: border-box;
  width: 100%;
  height: 78px;
  padding: 17px 24px 15px;
  border: 2px solid #e2e8f0;
  border-radius: 16px;
  background: #fff;
  color: #0f172a;
  font-family: Inter, "Noto Sans", sans-serif;
  font-size: 28px;
  line-height: 42px;
  letter-spacing: -.28px;
  outline: none;
  text-rendering: geometricPrecision;
}
.area-wrap { position: relative; display: block; }
.area { height: 162px; display: block; resize: none; padding-top: 16px; }
.grip {
  position: absolute;
  right: 3px;
  bottom: 4px;
  width: 16px;
  height: 16px;
  fill: none;
  stroke: #666;
  stroke-width: 1.6;
  pointer-events: none;
}
.sel-wrap { position: relative; display: block; }
.sel { display: block; height: 73px; padding: 0 0 0 28px; appearance: none; }
.sel-arrow {
  position: absolute;
  right: 8px;
  top: 30px;
  width: 20px;
  height: 12px;
  fill: none;
  stroke: #0a0a14;
  stroke-width: 4;
  pointer-events: none;
}
.hint { margin-top: 10px; line-height: 40px; color: #94a3b8; }

.modal-foot {
  flex: none;
  margin: 48px 48px 0;
  padding-top: 32px;
  border-top: 2px solid #e2e8f0;
  display: flex;
  justify-content: flex-end;
  align-items: center;
  gap: 50px;
}
.cancel { font-size: 26px; font-weight: 500; color: #475569; }
.save {
  width: 182px;
  height: 80px;
  border-radius: 16px;
  background: #4f46e5;
  color: #fff;
  font-size: 27px;
  font-weight: 500;
  display: flex;
  align-items: center;
  justify-content: center;
  gap: 14px;
}
</style>
